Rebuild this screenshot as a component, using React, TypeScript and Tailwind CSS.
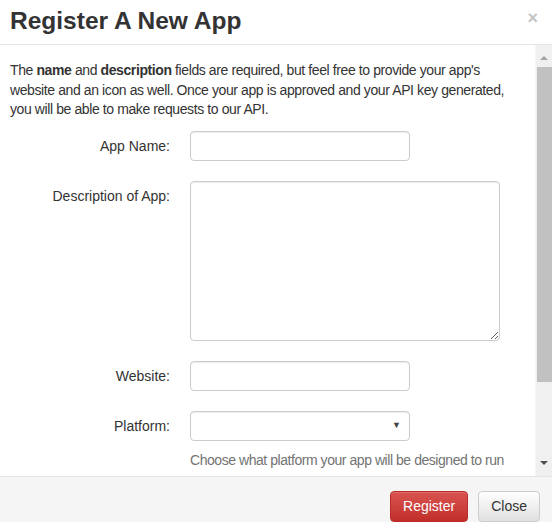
import React from 'react';

// Campo com rótulo à esquerda e controle à direita
const Field: React.FC<{ label: string; children: React.ReactNode }> = ({ label, children }) => (
  <div className="flex items-start mb-5">
    <label className="w-[160px] shrink-0 text-right pt-[5px] leading-5 text-[14px] text-[#333]">{label}</label>
    <div className="ml-5">{children}</div>
  </div>
);

const inputCls =
  'block h-[30px] rounded-[4px] border border-[#ccc] bg-white px-3 text-[14px] text-[#555] shadow-[inset_0_1px_1px_rgba(0,0,0,0.075)] outline-none';

const App: React.FC = () => {
  return (
    <div className="w-[552px] h-[522px] bg-white flex flex-col overflow-hidden text-[#333]" style={{ fontFamily: '"Liberation Sans", Arial, sans-serif' }}>
      {/* Cabeçalho */}
      <div className="h-[45px] shrink-0 border-b border-[#e5e5e5] flex items-center justify-between pl-[10px] pr-[14px]">
        <h2 className="text-[24.5px] font-bold leading-none text-[#333] -mt-[2px]">Register A New App</h2>
        <button className="text-[#c4c4c4] text-[18px] font-bold leading-none -mt-[8px]">×</button>
      </div>

      {/* Corpo com barra de rolagem */}
      <div className="flex-1 flex min-h-0">
        <div className="flex-1 overflow-hidden pl-[10px] pt-[16px] pr-[10px]">
          <p className="text-[14px] leading-[19.5px] text-[#333] mb-[11px] whitespace-nowrap tracking-[-0.4px]">
            The <b>name</b> and <b>description</b> fields are required, but feel free to provide your app's
            <br />
            website and an icon as well. Once your app is approved and your API key generated,
            <br />
            you will be able to make requests to our API.
          </p>

          <Field label="App Name:">
            <input type="text" className={`${inputCls} w-[220px]`} />
          </Field>

          <Field label="Description of App:">
            <textarea className={`${inputCls} w-[310px] h-[160px] py-1 resize`} />
          </Field>

          <Field label="Website:">
            <input type="text" className={`${inputCls} w-[220px]`} />
          </Field>

          <div className="flex items-start">
            <label className="w-[160px] shrink-0 text-right pt-[5px] leading-5 text-[14px] text-[#333]">Platform:</label>
            <div className="ml-5">
              <div className={`${inputCls} w-[220px] flex items-center justify-end pr-[8px]`}>
                <span className="text-[9px] text-[#444]">▼</span>
              </div>
              <p className="mt-[9px] text-[14px] leading-5 text-[#737373] whitespace-nowrap tracking-[-0.45px]">
                Choose what platform your app will be designed to run
              </p>
            </div>
          </div>
        </div>

        {/* Barra de rolagem desenhada */}
        <div className="w-[17px] shrink-0 bg-[#f0f0f0] border-l border-[#f7f7f7] flex flex-col items-center">
          <div className="h-[22px] w-full flex items-center justify-center pt-[3px]">
            <div className="w-0 h-0 border-x-[4px] border-x-transparent border-b-[4px] border-b-[#a3a3a3]" />
          </div>
          <div className="h-[315px] w-[16px] ml-[1px] bg-[#c1c1c1]" />
          <div className="flex-1" />
          <div className="h-[22px] w-full flex items-center justify-center pb-[4px]">
            <div className="w-0 h-0 border-x-[4px] border-x-transparent border-t-[4px] border-t-[#505050]" />
          </div>
        </div>
      </div>

      {/* Rodapé */}
      <div className="h-[46px] shrink-0 border-t border-[#e5e5e5] bg-[#f5f5f5] flex items-start justify-end gap-[10px] pt-[14px] pr-[12px]">
        <button className="h-[31px] px-3 rounded-[4px] border border-[#b92c28] text-white text-[14px] bg-gradient-to-b from-[#d9534f] to-[#c12e2a] shadow-[inset_0_1px_0_rgba(255,255,255,0.15)]">
          Register
        </button>
        <button className="h-[31px] px-3 rounded-[4px] border border-[#ccc] text-[#333] text-[14px] bg-gradient-to-b from-white to-[#e0e0e0]">
          Close
        </button>
      </div>
    </div>
  );
};

export default App;
